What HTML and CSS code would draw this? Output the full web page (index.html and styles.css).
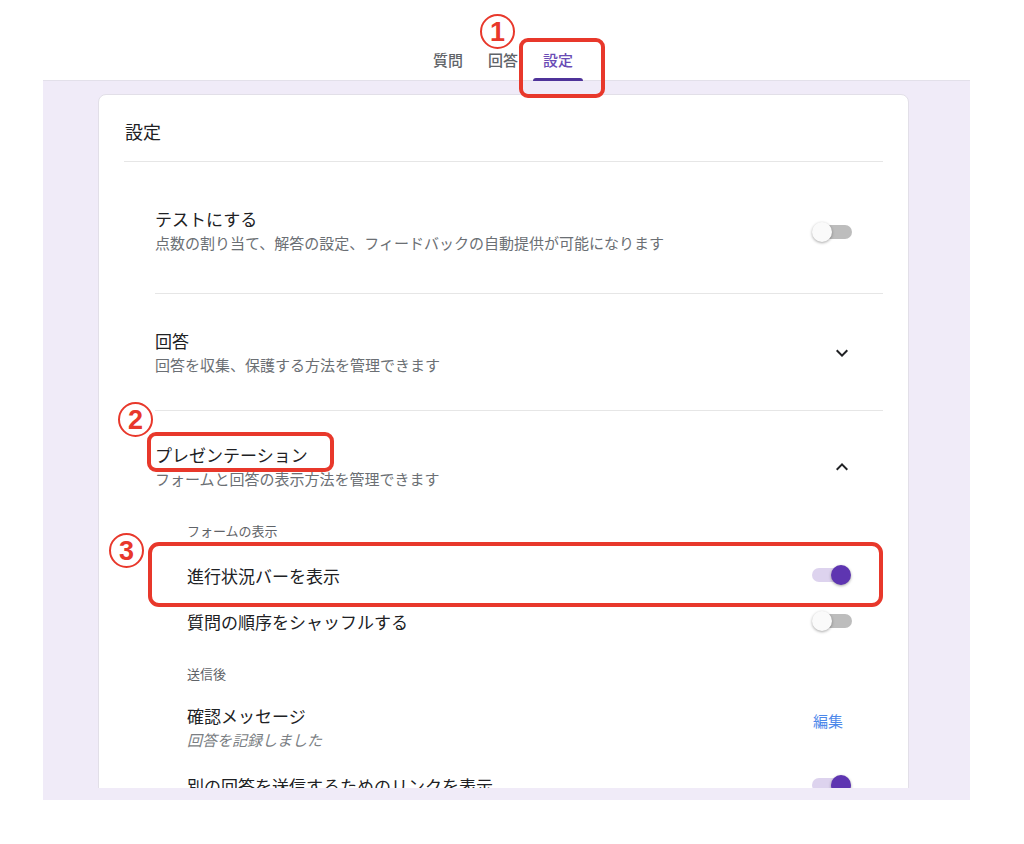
FILE: index.html
```html
<!DOCTYPE html>
<html lang="ja">
<head>
<meta charset="utf-8">
<title>設定</title>
<link rel="stylesheet" href="styles.css">
</head>
<body>
<div class="page">
  <div class="frame">
    <header class="tabbar">
      <div class="tab">質問</div>
      <div class="tab">回答</div>
      <div class="tab active">設定</div>
    </header>
    <main class="backdrop">
      <div class="viewport">
        <section class="card">
          <div class="card-header">設定</div>
          <div class="sections">
            <div class="section s-test">
              <div class="row">
                <div class="text">
                  <div class="title">テストにする</div>
                  <div class="sub">点数の割り当て、解答の設定、フィードバックの自動提供が可能になります</div>
                </div>
                <div class="switch"><span class="track"></span><span class="knob"></span></div>
              </div>
            </div>
            <div class="section s-answer">
              <div class="row">
                <div class="text">
                  <div class="title">回答</div>
                  <div class="sub">回答を収集、保護する方法を管理できます</div>
                </div>
                <svg class="chev" viewBox="0 0 24 24" width="24" height="24"><path d="M7.41 8.59 12 13.17l4.59-4.58L18 10l-6 6-6-6z"/></svg>
              </div>
            </div>
            <div class="section s-present">
              <div class="row">
                <div class="text">
                  <div class="title">プレゼンテーション</div>
                  <div class="sub">フォームと回答の表示方法を管理できます</div>
                </div>
                <svg class="chev" viewBox="0 0 24 24" width="24" height="24"><path d="M7.41 15.41 12 10.83l4.59 4.58L18 14l-6-6-6 6z"/></svg>
              </div>
              <div class="sub-block">
                <div class="label l-first">フォームの表示</div>
                <div class="subrow r-first">
                  <span class="subtitle">進行状況バーを表示</span>
                  <div class="switch on"><span class="track"></span><span class="knob"></span></div>
                </div>
                <div class="subrow">
                  <span class="subtitle">質問の順序をシャッフルする</span>
                  <div class="switch"><span class="track"></span><span class="knob"></span></div>
                </div>
                <div class="label l-second">送信後</div>
                <div class="confirm">
                  <div class="text">
                    <div class="title">確認メッセージ</div>
                    <div class="sub italic">回答を記録しました</div>
                  </div>
                  <span class="edit">編集</span>
                </div>
                <div class="subrow r-last">
                  <span class="subtitle">別の回答を送信するためのリンクを表示</span>
                  <div class="switch on"><span class="track"></span><span class="knob"></span></div>
                </div>
              </div>
            </div>
          </div>
        </section>
      </div>
    </main>
  </div>

  <div class="mark num n1"><span>1</span></div>
  <div class="mark box b1"></div>
  <div class="mark num n2"><span>2</span></div>
  <div class="mark box b2"></div>
  <div class="mark num n3"><span>3</span></div>
  <div class="mark box b3"></div>
</div>
</body>
</html>
```

FILE: styles.css
```css
html, body {
  margin: 0;
  padding: 0;
  background: #ffffff;
}

body {
  font-family: "Noto Sans CJK JP", "Noto Sans", "Liberation Sans", sans-serif;
  color: #202124;
}

.page {
  position: relative;
  width: 1024px;
  height: 844px;
  overflow: hidden;
}

.frame {
  margin-left: 43px;
  width: 927px;
}

/* tabs */
.tabbar {
  height: 80px;
  border-bottom: 1px solid #e3e0ea;
  display: flex;
  justify-content: center;
  align-items: flex-end;
  gap: 5px;
  padding-right: 7px;
  box-sizing: content-box;
  background: #ffffff;
}

.tab {
  position: relative;
  width: 50px;
  height: 40px;
  line-height: 40px;
  text-align: center;
  font-size: 15px;
  font-weight: 500;
  color: #5f6368;
}

.tab.active {
  color: #6a4bb5;
}

.tab.active::after {
  content: "";
  position: absolute;
  left: 0;
  right: 0;
  bottom: -1px;
  height: 3px;
  border-radius: 3px 3px 0 0;
  background: #4f3399;
}

/* lavender area */
.backdrop {
  background: #f0ebf8;
  padding-bottom: 12px;
}

.viewport {
  height: 707px;
  overflow: hidden;
}

.card {
  margin: 13px 0 0 55px;
  width: 811px;
  box-sizing: border-box;
  background: #ffffff;
  border: 1px solid #e2dfe8;
  border-radius: 8px;
  padding: 0 25px 40px;
}

.card-header {
  font-size: 18px;
  line-height: 24px;
  padding: 24px 0 18px 1px;
  border-bottom: 1px solid #e6e6e6;
}

.sections {
  margin-left: 31px;
}

.section {
  border-bottom: 1px solid #e6e6e6;
  padding-right: 31px;
}

.section.s-present {
  border-bottom: none;
}

.s-test { padding-top: 44px; padding-bottom: 38px; }
.s-answer { padding-top: 34px; padding-bottom: 33px; }
.s-present { padding-top: 31px; }

.row {
  display: flex;
  align-items: center;
  justify-content: space-between;
}

.s-test .row .switch {
  margin-top: 3px;
}

.title {
  font-size: 17px;
  line-height: 25px;
  color: #202124;
}

.sub {
  font-size: 15px;
  line-height: 24px;
  color: #6b6f74;
}

.sub.italic {
  font-style: italic;
  color: #7a7e83;
}

.chev {
  fill: #202124;
  margin-right: -2px;
}

/* switches */
.switch {
  position: relative;
  width: 40px;
  height: 20px;
  flex: none;
}

.switch .track {
  position: absolute;
  left: 4px;
  top: 3px;
  width: 36px;
  height: 14px;
  border-radius: 7px;
  background: #bdbdbd;
}

.switch .knob {
  position: absolute;
  left: 0;
  top: 0;
  width: 20px;
  height: 20px;
  border-radius: 50%;
  background: #fafafa;
  box-shadow: 0 1px 3px rgba(0, 0, 0, 0.35);
}

.switch.on .track {
  left: 0;
  background: #ddd3ee;
}

.switch.on .knob {
  left: 19px;
  background: #5e35b1;
}

/* sub block */
.sub-block {
  padding-left: 32px;
}

.label {
  font-size: 13px;
  line-height: 20px;
  color: #5f6368;
}

.l-first { margin-top: 30px; }
.l-second { margin-top: 20px; }

.subrow {
  height: 46px;
  display: flex;
  align-items: center;
  justify-content: space-between;
}

.r-first { margin-top: 11px; }
.r-last { margin-top: 10px; }

.subtitle {
  font-size: 17px;
  color: #202124;
}

.confirm {
  margin-top: 19px;
  display: flex;
  justify-content: space-between;
  align-items: flex-start;
}

.edit {
  margin-top: 6px;
  margin-right: 9px;
  font-size: 15px;
  line-height: 24px;
  color: #4d88ea;
}

/* red annotations (overlay) */
.mark {
  position: absolute;
  box-sizing: border-box;
}

.num {
  width: 35px;
  height: 35px;
  border: 2.5px solid #e8382b;
  border-radius: 50%;
  display: flex;
  align-items: center;
  justify-content: center;
  color: #e8382b;
  font-family: "Liberation Sans", "Noto Sans", sans-serif;
  font-weight: 700;
  font-size: 27px;
}

.num span {
  display: block;
  line-height: 1;
  margin-top: 1px;
}

.n1 { left: 480px; top: 14px; background: #ffffff; }
.n2 { left: 118px; top: 402px; }
.n3 { left: 109px; top: 533px; }

.box {
  border: 4px solid #e8382b;
  border-radius: 9px;
}

.b1 { left: 519px; top: 38px; width: 86px; height: 60px; }
.b2 { left: 147px; top: 432px; width: 187px; height: 40px; }
.b3 { left: 148px; top: 542px; width: 735px; height: 65px; border-width: 4.5px; border-radius: 11px; }
```
